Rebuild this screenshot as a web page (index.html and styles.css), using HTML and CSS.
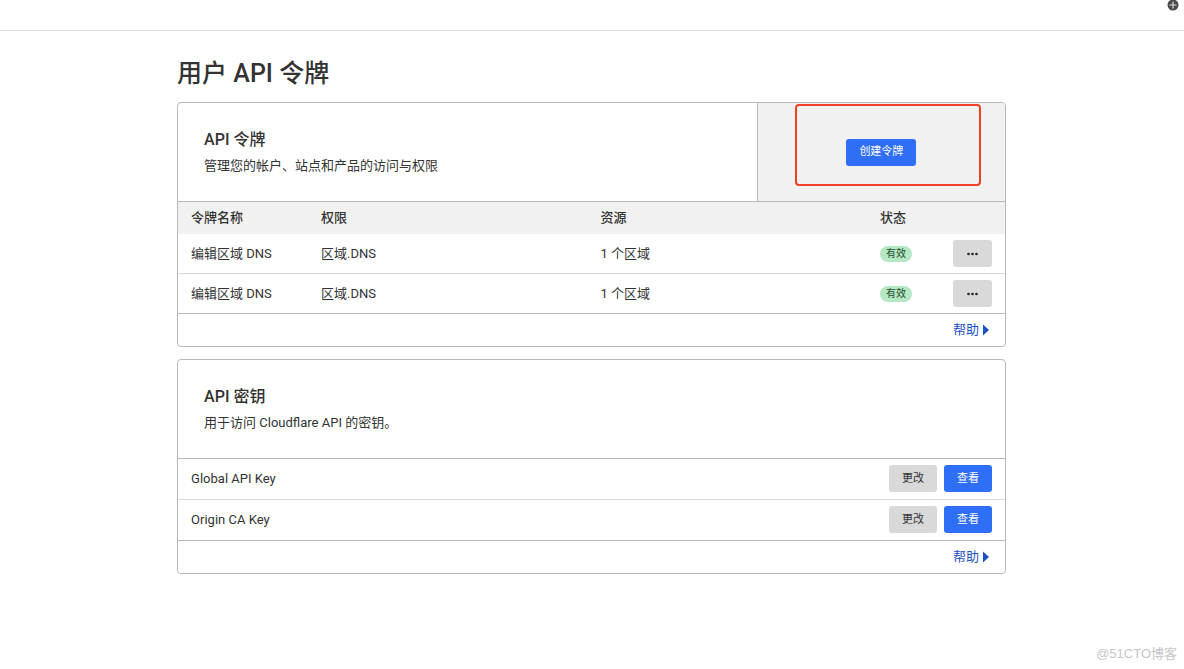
FILE: index.html
```html
<!DOCTYPE html>
<html lang="zh-CN">
<head>
<meta charset="utf-8">
<meta name="viewport" content="width=device-width, initial-scale=1">
<title>用户 API 令牌</title>
<link rel="stylesheet" href="styles.css">
</head>
<body>
<header class="topbar">
  <button class="add" aria-label="添加">
    <svg width="12" height="11" viewBox="0 1 12 11" aria-hidden="true"><circle cx="6" cy="6" r="5.5" fill="#4a4a4a"/><path d="M6 2.5v7M2.5 6h7" stroke="#ddd" stroke-width="1.2"/></svg>
  </button>
</header>
<main class="page">
  <h1 class="title">用户 API 令牌</h1>

  <section class="card">
    <div class="card-head">
      <div class="intro">
        <h2 class="card-title">API 令牌</h2>
        <p class="card-text">管理您的帐户、站点和产品的访问与权限</p>
      </div>
      <div class="action">
        <button class="btn primary">创建令牌</button>
        <span class="highlight"></span>
      </div>
    </div>
    <table class="tokens">
      <colgroup><col class="c-name"><col class="c-wide"><col class="c-wide"><col class="c-status"><col class="c-menu"></colgroup>
      <thead>
        <tr><th>令牌名称</th><th>权限</th><th>资源</th><th>状态</th><th></th></tr>
      </thead>
      <tbody>
        <tr>
          <td>编辑区域 DNS</td><td>区域.DNS</td><td>1 个区域</td><td><span class="badge">有效</span></td>
          <td class="menu-cell"><button class="btn menu" aria-label="更多"><svg width="13" height="4" viewBox="0 0 13 4" fill="#222" aria-hidden="true"><circle cx="2.5" cy="2" r="1.3"/><circle cx="6.5" cy="2" r="1.3"/><circle cx="10.5" cy="2" r="1.3"/></svg></button></td>
        </tr>
        <tr>
          <td>编辑区域 DNS</td><td>区域.DNS</td><td>1 个区域</td><td><span class="badge">有效</span></td>
          <td class="menu-cell"><button class="btn menu" aria-label="更多"><svg width="13" height="4" viewBox="0 0 13 4" fill="#222" aria-hidden="true"><circle cx="2.5" cy="2" r="1.3"/><circle cx="6.5" cy="2" r="1.3"/><circle cx="10.5" cy="2" r="1.3"/></svg></button></td>
        </tr>
      </tbody>
    </table>
    <div class="card-foot">
      <a class="help" href="#">帮助<svg width="6" height="12" viewBox="0 0 6 12" aria-hidden="true"><path d="M0 0.5L6 6L0 11.5Z" fill="#1d50c4"/></svg></a>
    </div>
  </section>

  <section class="card">
    <div class="card-head">
      <div class="intro">
        <h2 class="card-title">API 密钥</h2>
        <p class="card-text">用于访问 Cloudflare API 的密钥。</p>
      </div>
    </div>
    <ul class="keys">
      <li class="key"><span>Global API Key</span><span class="key-actions"><button class="btn">更改</button><button class="btn primary">查看</button></span></li>
      <li class="key"><span>Origin CA Key</span><span class="key-actions"><button class="btn">更改</button><button class="btn primary">查看</button></span></li>
    </ul>
    <div class="card-foot">
      <a class="help" href="#">帮助<svg width="6" height="12" viewBox="0 0 6 12" aria-hidden="true"><path d="M0 0.5L6 6L0 11.5Z" fill="#1d50c4"/></svg></a>
    </div>
  </section>
</main>
<footer class="watermark">@51CTO博客</footer>
</body>
</html>
```
FILE: styles.css
```css
* {
  box-sizing: border-box;
}

body {
  display: flex;
  flex-direction: column;
  min-height: 100vh;
  margin: 0;
  background: #fff;
  color: #333;
  font: 13px/20px Roboto, "Noto Sans CJK SC", sans-serif;
}

button {
  font: inherit;
}

.topbar {
  display: flex;
  justify-content: flex-end;
  align-items: flex-start;
  height: 31px;
  padding-right: 5px;
  border-bottom: 1px solid #dcdcdc;
}

.add {
  display: flex;
  padding: 0;
  border: 0;
  background: none;
}

.page {
  width: calc(70% + 1px);
  margin: 0 auto;
  padding: 27px 1px 0 0;
}

.title {
  margin: 0 0 12px;
  font-size: 25px;
  line-height: 32px;
  font-weight: 500;
}

.card {
  margin-bottom: 12px;
  border: 1px solid #b9b9b9;
  border-radius: 4px;
  overflow: hidden;
}

.card-head {
  display: flex;
  border-bottom: 1px solid #b9b9b9;
}

.intro {
  flex: 1;
  padding: 26px 26px 25px;
}

.card-title {
  margin: 0 0 5px;
  font-size: 16px;
  line-height: 22px;
  font-weight: 500;
}

.card-text {
  margin: 0;
}

.action {
  position: relative;
  width: 30%;
  display: flex;
  align-items: center;
  justify-content: center;
  border-left: 1px solid #b9b9b9;
  background: #f1f1f1;
}

.highlight {
  position: absolute;
  top: 1px;
  right: 24px;
  bottom: 15px;
  left: 37px;
  border: 2px solid #ee4022;
  border-radius: 4px;
  pointer-events: none;
}

.btn {
  height: 27px;
  padding: 0 13px;
  border: 0;
  border-radius: 3px;
  background: #d9d9d9;
  color: #333;
  font-size: 11px;
  line-height: 16px;
}

.primary {
  background: #2f6ef6;
  color: #fff;
}

.tokens {
  width: 100%;
  border-collapse: collapse;
  table-layout: fixed;
}

.tokens th,
.tokens td {
  padding: 6px 0 6px 13px;
  text-align: left;
  vertical-align: middle;
}

.tokens th {
  background: #f1f1f1;
  font-weight: 500;
}

.tokens tbody tr + tr {
  border-top: 1px solid #d9d9d9;
}

.c-name {
  width: 130px;
}

.c-status,
.c-menu {
  width: 69px;
}

.tokens .menu-cell {
  padding-right: 13px;
  text-align: right;
}

.menu {
  display: inline-flex;
  align-items: center;
  vertical-align: top;
}

.badge {
  display: block;
  width: fit-content;
  padding: 0 6px;
  border-radius: 8px;
  background: #b5e8c3;
  color: #224a2f;
  font-size: 10px;
  line-height: 16px;
}

.card-foot {
  display: flex;
  justify-content: flex-end;
  padding: 6px 16px;
  border-top: 1px solid #b9b9b9;
}

.help {
  display: flex;
  align-items: center;
  gap: 4px;
  color: #1d50c4;
  text-decoration: none;
}

.keys {
  margin: 0;
  padding: 0;
  list-style: none;
}

.key {
  display: flex;
  align-items: center;
  justify-content: space-between;
  padding: 6px 13px 7px;
}

.key + .key {
  border-top: 1px solid #d9d9d9;
}

.key-actions {
  display: flex;
  gap: 7px;
}

.watermark {
  margin-top: auto;
  padding: 0 7px 5px 0;
  color: #c6c6c6;
  font: 13px/20px "Liberation Sans", "Noto Sans CJK SC", sans-serif;
  text-align: right;
}
```
